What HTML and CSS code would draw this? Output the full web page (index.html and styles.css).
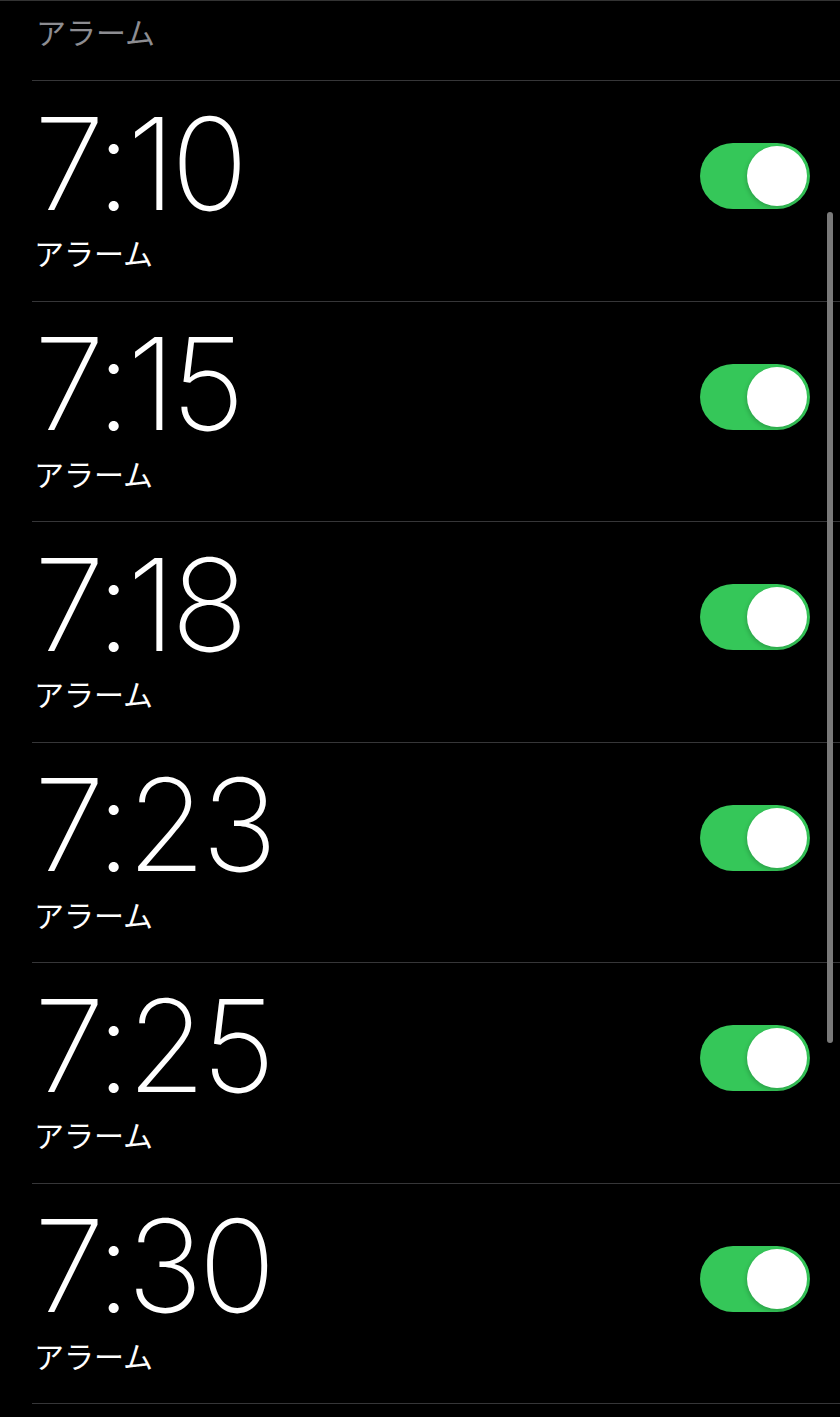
FILE: index.html
```html
<!DOCTYPE html>
<html lang="ja">
<head>
    <meta charset="UTF-8">
    <meta name="viewport" content="width=device-width, initial-scale=1.0">
    <title>アラーム</title>
    <link rel="stylesheet" href="styles.css">
</head>
<body>

    <div class="screen">
        <!-- Section header -->
        <div class="section-title">アラーム</div>

        <!-- Alarm list -->
        <div class="alarm-list">
            <div class="alarm">
                <div class="alarm-info">
                    <div class="alarm-time">7:10</div>
                    <div class="alarm-label">アラーム</div>
                </div>
                <div class="switch on"><span class="knob"></span></div>
            </div>
            <div class="alarm">
                <div class="alarm-info">
                    <div class="alarm-time">7:15</div>
                    <div class="alarm-label">アラーム</div>
                </div>
                <div class="switch on"><span class="knob"></span></div>
            </div>
            <div class="alarm">
                <div class="alarm-info">
                    <div class="alarm-time">7:18</div>
                    <div class="alarm-label">アラーム</div>
                </div>
                <div class="switch on"><span class="knob"></span></div>
            </div>
            <div class="alarm">
                <div class="alarm-info">
                    <div class="alarm-time">7:23</div>
                    <div class="alarm-label">アラーム</div>
                </div>
                <div class="switch on"><span class="knob"></span></div>
            </div>
            <div class="alarm">
                <div class="alarm-info">
                    <div class="alarm-time">7:25</div>
                    <div class="alarm-label">アラーム</div>
                </div>
                <div class="switch on"><span class="knob"></span></div>
            </div>
            <div class="alarm">
                <div class="alarm-info">
                    <div class="alarm-time">7:30</div>
                    <div class="alarm-label">アラーム</div>
                </div>
                <div class="switch on"><span class="knob"></span></div>
            </div>
        </div>

        <!-- Scroll indicator -->
        <div class="scrollbar"></div>
    </div>

</body>
</html>
```

FILE: styles.css
```css
html, body {
    margin: 0;
    padding: 0;
    background-color: #000;
}
body {
    font-family: Inter, "Noto Sans CJK JP", sans-serif;
    color: #fff;
}
.screen {
    position: relative;
    min-height: 1417px;
    border-top: 1px solid #333;
    overflow: hidden;
}
.section-title {
    height: 79px;
    padding-left: 36px;
    box-sizing: border-box;
    padding-top: 15px;
    font-family: "Noto Sans CJK JP", sans-serif;
    font-size: 30px;
    line-height: 30px;
    color: #8d8d92;
}
.alarm-list {
    margin-left: 32px;
}
.alarm {
    display: flex;
    justify-content: space-between;
    align-items: flex-start;
    height: 219.5px;
    border-top: 1px solid #363638;
}
.alarm:last-child {
    border-bottom: 1px solid #363638;
}
.alarm-info {
    padding-top: 32.5px;
    padding-left: 2px;
}
.alarm-time {
    font-family: Inter, sans-serif;
    font-weight: 200;
    font-size: 128px;
    line-height: 100px;
    letter-spacing: -4.5px;
}
.alarm-label {
    margin-top: 23.5px;
    font-family: "Noto Sans CJK JP", sans-serif;
    font-size: 30px;
    line-height: 30px;
}
.switch {
    position: relative;
    width: 110px;
    height: 66px;
    margin-top: 62px;
    margin-right: 30px;
    border-radius: 33px;
    background-color: #35c759;
}
.knob {
    position: absolute;
    top: 3px;
    right: 3px;
    width: 60px;
    height: 60px;
    border-radius: 50%;
    background-color: #fff;
    box-shadow: -1px 2px 4px rgba(0, 0, 0, 0.18);
}
.scrollbar {
    position: absolute;
    top: 211px;
    right: 7px;
    width: 6px;
    height: 831px;
    border-radius: 3px;
    background-color: #7a7a7a;
}
```
